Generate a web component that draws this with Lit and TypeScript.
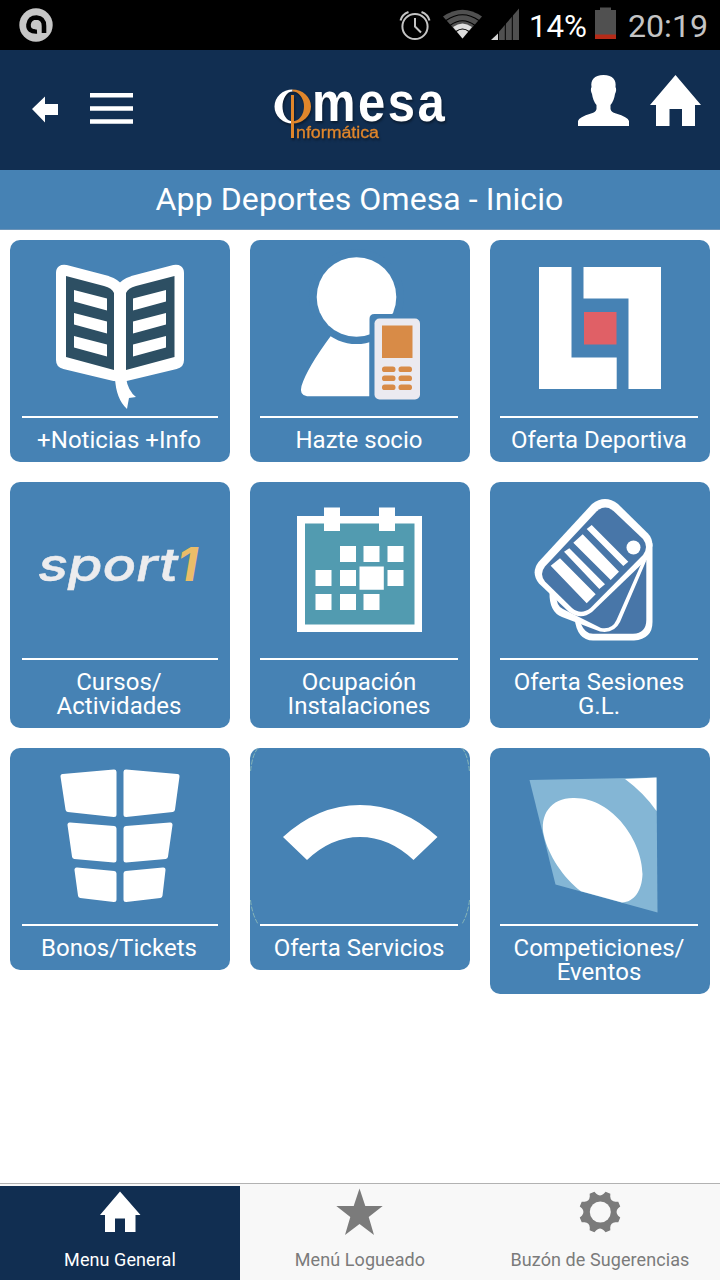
import { LitElement, html, svg, css } from 'lit';
import { customElement } from 'lit/decorators.js';

const gearPath = (() => {
  const pt = (deg: number, r: number) => {
    const a = (deg * Math.PI) / 180;
    return `${(600 + r * Math.sin(a)).toFixed(2)} ${(1212 - r * Math.cos(a)).toFixed(2)}`;
  };
  let d = '';
  for (let k = 0; k < 8; k++) {
    const c = 22.5 + 45 * k;
    d += `${k ? 'L' : 'M'}${pt(c - 7, 21)}L${pt(c + 7, 21)}L${pt(c + 11, 18.5)}Q${pt(c + 22.5, 15)} ${pt(c + 34, 18.5)}`;
  }
  return d + 'Z';
})();

const book = svg`
  <path fill="#fff" stroke="#fff" stroke-width="6" stroke-linejoin="round" d="M66 268Q59 267 59 273V360Q59 365 64 366L114 378Q120 380 126 378L176 366Q181 365 181 360V273Q181 267 174 268L132 279Q123 282 120 287Q117 282 108 279Z"/>
  <path fill="#fff" d="M115 378Q116 399 127 409Q128 403 129 398L136 397Q128 391 126 378Z"/>
  <path fill="#2d4f63" d="M66 276L104 286Q112 288 114 293V370L66 357ZM174.500 276L136 286Q128 288 126 293V370L174.500 357Z"/>
  <path fill="#fff" d="M74 290l33 8.500v12l-33-9zM74 313l33 8.500v12l-33-9zM74 336l33 8.500v12l-33-9zM166 290l-33 8.500v12l33-9zM166 313l-33 8.500v12l33-9zM166 336l-33 8.500v12l33-9z"/>`;

const member = svg`
  <path fill="#fff" d="M369.500 335.500V396.300H307Q299 395 301.500 386Q307 368 331.500 335Q349 348 369.500 341Z"/>
  <circle cx="356.500" cy="296.500" r="47.500" fill="#4682b4"/>
  <circle cx="356.500" cy="297" r="39.800" fill="#fff"/>
  <path fill="#4682b4" d="M369.500 400V319Q369.500 314 374.500 314H425V400Z"/>
  <rect x="374.500" y="318.500" width="45.500" height="81" rx="5" fill="#ebeaf0"/>
  <path fill="#d88b47" d="M382 325.500h30.500v32.500H382z"/>
  ${[367, 376, 385].map(y => svg`<rect x="382" y=${y - 0.4} width="13.500" height="5.500" rx="2.700" fill="#d88b47"/><rect x="398.500" y=${y - 0.4} width="13.500" height="5.500" rx="2.700" fill="#d88b47"/>`)}`;

const offer = svg`
  <path fill="#fff" d="M539 267h32.500v90.500h45.200V389H539zM583.500 267H661v122h-32.500v-90.500h-45z"/>
  <path fill="#e06066" d="M584 312h32.500v32.500H584z"/>`;

const sport = svg`
  <g font-family="Inter, Roboto, sans-serif" font-style="italic" font-weight="500" font-size="46">
    <text x="38" y="581" fill="#ececee" stroke="#ececee" stroke-width="0.500" textLength="140" lengthAdjust="spacingAndGlyphs">sport</text>
    <text x="177" y="581" fill="#ebbd69" textLength="21" lengthAdjust="spacingAndGlyphs" font-weight="700">1</text>
  </g>`;

const calendar = svg`
  <path fill="#fff" d="M297 516h125v116H297z"/>
  <path fill="#529bb0" d="M305 523.500h109.500v101H305z"/>
  <path fill="#fff" d="M324 507.500h16V531h-16zM379 507.500h16V531h-16zM340 546h16v16h-16zM363.500 546h16v16h-16zM387.500 546h16v16h-16zM315.500 570h16v16h-16zM340 570h16v16h-16zM359.500 566.500h24.300v23.300h-24.300zM387.500 570h16v16h-16zM315.500 594h16v16h-16zM340 594h16v16h-16zM363.500 594h16v16h-16z"/>`;

const cards = svg`
  <path fill="#fff" d="M574.500 618Q577 640.500 593 640.500H634Q652.500 639 652.500 622V543L600 595Z"/>
  <path fill="#4876a8" d="M581 624Q585 633.800 593 633.800H633Q646.300 633 646.300 620V560L610 600Z"/>
  <path fill="#fff" d="M549.500 592Q549 612 562 617L600 631.500Q614 634 620 622L646.500 560L600 580Z"/>
  <path fill="#4876a8" d="M556.500 595Q556 606 563 609L601 628Q612 630 616.500 620L642 562L600 585Z"/>
  <path fill="#fff" d="M538.500 562L592 504Q605 494 618 504L648 533.500Q652.500 538 652.500 546L646 560L592 612Q581 620.500 569 612L539 583.500Q530.500 573 538.500 562Z"/>
  <path fill="#4876a8" d="M545 566.500L596.500 511.500Q605 504 613.500 511L643 539Q649 547 643 555L590.500 608Q581 615.500 572 608L545 581.500Q539 574 545 566.500Z"/>
  <g fill="#fff">
    <circle cx="633.500" cy="547.500" r="7"/>
    <path d="M550.700 565.700L560 558.300L595.700 594.300L586.700 603.300ZM564 551.700L569.300 548.300L605 584.300L599.300 589ZM573.300 542.700L582.700 534.300L619 571.700L610.700 580ZM586.700 529L591.700 525L628.300 561.700L623.300 566Z"/>
  </g>`;

const tickets = svg`
  <g fill="#fff" stroke="#fff" stroke-width="5" stroke-linejoin="round">
    <path d="M63 776.500L114 772V814.500L68 809.500Z"/><path d="M177 776.500L126 772V814.500L172.500 809.500Z"/>
    <path d="M70 825L114 828.500V860L74.500 856.500Z"/><path d="M170 825L126 828.500V860L165.500 856.500Z"/>
    <path d="M77 870L114 873.500V899.500L80.500 895.500Z"/><path d="M163 870L126 873.500V899.500L160 895.500Z"/>
  </g>`;

const services = svg`
  <path fill="none" stroke="#86b5b7" stroke-width="1" stroke-dasharray="5 1.500" d="M258 748Q252 755 250.500 772M462 748Q468 755 469.500 772M250.500 900Q252 914 258 924M469.500 900Q468 914 462 924"/>
  <path fill="#fff" d="M283 837Q318 805 360 805Q402 805 437.500 837L413.500 860Q389 837 360 837Q331 837 307 860Z"/>`;

const events = svg`
  <path fill="#84b6d5" d="M529.500 780L656.500 777.500L657.500 912.500L555.500 884.500Z"/>
  <path fill="#fff" d="M625 779L656.500 777.500V811Q644 793 625 779Z"/>
  <path fill="#fff" d="M573 798C613 797 642.500 842 642.500 874C642 891 634 902 622 902.500L581 891.300C563 878 548 854 544 836C539 815 551 798 573 798Z"/>`;

const tiles = [
  [book, ['+Noticias +Info'], 10, 240],
  [member, ['Hazte socio'], 250, 240],
  [offer, ['Oferta Deportiva'], 490, 240],
  [sport, ['Cursos/', 'Actividades'], 10, 482],
  [calendar, ['Ocupación', 'Instalaciones'], 250, 482],
  [cards, ['Oferta Sesiones', 'G.L.'], 490, 482],
  [tickets, ['Bonos/Tickets'], 10, 748],
  [services, ['Oferta Servicios'], 250, 748],
  [events, ['Competiciones/', 'Eventos'], 490, 748],
] as const;

@customElement('app-root')
export class AppRoot extends LitElement {
  static styles = css`
    :host { display: flex; flex-direction: column; height: 1280px; width: 720px; background: #fff; font-family: Roboto, sans-serif; color: #fff; overflow: hidden; }
    svg { display: block; flex: none; }
    .status { height: 50px; background: #000; display: flex; }
    .header { height: 120px; background: #112e51; }
    .wordmark { filter: drop-shadow(1px 2px 1px rgba(0, 0, 0, 0.4)); }
    .title { height: 59px; line-height: 58px; background: #4682b4; border-bottom: 1px solid #6d94b8; text-align: center; font-size: 32px; letter-spacing: 0.1px; padding-right: 1px; }
    .grid { display: grid; grid-template-columns: repeat(3, 220px); gap: 20px; padding: 10px; align-items: start; }
    .tile { background: #4682b4; border-radius: 10px; overflow: hidden; padding-bottom: 10px; }
    .rule { height: 2px; background: #fff; margin: 0 12px 10px 10px; }
    .tile.first .rule { margin-left: 12px; }
    .label { font-size: 24px; line-height: 24px; letter-spacing: 0.03px; text-align: center; padding-right: 2px; white-space: nowrap; }
    .tabs { margin-top: auto; height: 96px; border-top: 1px solid #b2b2b2; background: #f8f8f8; display: grid; grid-template-columns: repeat(3, 1fr); color: #7b7b7b; }
    .tab { margin-top: 2px; text-align: center; font-size: 18px; line-height: 22px; letter-spacing: 0.08px; }
    .tab.active { background: #112e51; color: #fff; }
    .tab svg { margin-bottom: 13px; }
  `;

  render() {
    return html`
      <div class="status">
        <svg width="720" height="50" viewBox="0 0 720 50" font-family="Roboto, sans-serif">
          <circle cx="36" cy="25" r="16.700" fill="#c6c6c6"/>
          <path fill="none" stroke="#000" stroke-width="4.600" d="M37 31.500Q28 32 28.500 24.500Q29.500 17.500 36.500 17.500Q44 18 44 26V33"/>
          <circle cx="36.300" cy="25" r="4.400" fill="#c6c6c6"/><path fill="#c6c6c6" d="M36.500 26h4.500v7l-3-1z"/>
          <g fill="none" stroke="#c4c4c4" stroke-width="2">
            <circle cx="415" cy="26.500" r="12.600"/><path d="M415 18v8.500l6 6M400.500 20.500Q402 14.500 408.500 12M429.500 20.500Q428 14.500 421.500 12"/>
          </g>
          <path fill="#505050" d="M443 16.500Q462.500 3 482 16.500L462.500 38.500Z"/>
          <path fill="#dedede" d="M453 27Q462.500 20 472 27L462.500 38.500Z"/>
          <path fill="none" stroke="#000" stroke-width="1.200" d="M446 20.500Q462.500 9 479 20.500M450 25.500Q462.500 16 475 25.500M456 31.500Q462.500 26.500 469 31.500"/>
          <path fill="#505050" d="M498 33L519 8.500V40H498z"/><path fill="#d4d4d4" d="M491 40L498 33.500V40z"/>
          <path stroke="#000" stroke-width="1" d="M498.500 8v32M505.300 8v32M512.300 8v32"/>
          <text x="529" y="37" font-size="32" fill="#fff" textLength="58" lengthAdjust="spacingAndGlyphs">14%</text>
          <path fill="#505050" d="M600 7.500h11V10h5v25h-21V10h5z"/><path fill="#b52b18" d="M595 34.500h21V39h-21z"/>
          <text x="628" y="37" font-size="32" fill="#c4c4c4" textLength="80" lengthAdjust="spacingAndGlyphs">20:19</text>
        </svg>
      </div>
      <div class="header">
        <svg width="720" height="120" viewBox="0 50 720 120">
          <g fill="#fff">
            <path d="M32 109L45 96.500V104H58v11H45v7.500zM90 93h43v4.500H90zM90 106.300h43v4.500H90zM90 119.300h43v4.500H90z"/>
            <path d="M603.500 75C613 75 616.500 80 615.500 87Q617 90 615 94Q614 101 610.500 105V109Q611 112 616 113.500Q628 117 629 121V126H578V121Q579 117 591 113.500Q596 112 596.500 109V105Q593 101 592 94Q590 90 591.500 87C590.500 80 594 75 603.500 75Z"/>
            <path d="M675.500 75L701 105H695V126H682V109H669.500V126H656V105H650z"/>
          </g>
          <g class="wordmark" font-family="Liberation Sans, sans-serif">
            <path fill="#fff" d="M292.500 89.500A18 17 0 0 0 292.500 123.500V121.500A10 15 0 0 1 292.500 91.500Z"/>
            <path fill="#e0862b" d="M292.500 89.500A18.500 17 0 0 1 292.500 123.500V121.500A11.500 15 0 0 0 292.500 91.500ZM291 95h3v43h-3z"/>
            <text transform="translate(312 121) scale(0.89 1)" font-size="55" font-weight="700" letter-spacing="2.800" fill="#fff">mesa</text>
            <text x="296" y="137.500" font-size="16" fill="#e0862b" stroke="#e0862b" stroke-width="0.300" textLength="83" lengthAdjust="spacingAndGlyphs">nformática</text>
          </g>
        </svg>
      </div>
      <div class="title">App Deportes Omesa - Inicio</div>
      <div class="grid">
        ${tiles.map(([icon, lines, x, y]) => html`
          <div class="tile ${x === 10 ? 'first' : ''}">
            <svg width="220" height="176" viewBox="${x} ${y} 220 176">${icon}</svg>
            <div class="rule"></div>
            ${lines.map(l => html`<div class="label">${l}</div>`)}
          </div>`)}
      </div>
      <div class="tabs">
        <div class="tab active">
          <svg width="240" height="50" viewBox="0 1186 240 50"><path fill="#fff" d="M120 1191.500L140.500 1215H135.500V1232H125V1218.500H115V1232H105V1215H100z"/></svg>
          Menu General
        </div>
        <div class="tab">
          <svg width="240" height="50" viewBox="240 1186 240 50"><path fill="#7b7b7b" d="M359.500 1188.500L365.300 1206H382.700L368.700 1217L374 1235L359.500 1224L345 1235L350.300 1217L336.300 1206H353.700z"/></svg>
          Menú Logueado
        </div>
        <div class="tab">
          <svg width="240" height="50" viewBox="480 1186 240 50"><path fill="#7b7b7b" d=${gearPath}/><circle cx="600.300" cy="1212" r="10.500" fill="#f8f8f8"/></svg>
          Buzón de Sugerencias
        </div>
      </div>`;
  }
}
